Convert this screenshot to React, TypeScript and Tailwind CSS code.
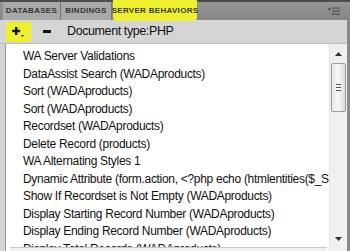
import React from "react";

const items = [
  "WA Server Validations",
  "DataAssist Search (WADAproducts)",
  "Sort (WADAproducts)",
  "Sort (WADAproducts)",
  "Recordset (WADAproducts)",
  "Delete Record (products)",
  "WA Alternating Styles 1",
  "Dynamic Attribute (form.action, <?php echo (htmlentities($_SERVER",
  "Show If Recordset is Not Empty (WADAproducts)",
  "Display Starting Record Number (WADAproducts)",
  "Display Ending Record Number (WADAproducts)",
  "Display Total Records (WADAproducts)",
];

export default function App() {
  return (
    <div
      className="w-[350px] h-[251px] overflow-hidden flex flex-col bg-[#d5d5d5] relative"
      style={{ fontFamily: "'Liberation Sans', Arial, sans-serif" }}
    >
      {/* Tab bar */}
      <div className="h-[20px] shrink-0 flex items-stretch bg-gradient-to-b from-[#959595] to-[#868686] border-t-2 border-[#4d4d4d] relative">
        <div className="ml-[3px] w-[58px] flex items-center justify-center whitespace-nowrap bg-[#a9a9a9] border-r border-[#777] text-[8px] font-bold text-[#353535] tracking-[0.3px]">
          DATABASES
        </div>
        <div className="w-[51px] flex items-center justify-center whitespace-nowrap bg-[#a9a9a9] border-r border-[#777] text-[8px] font-bold text-[#353535] tracking-[0.3px]">
          BINDINGS
        </div>
        <div className="ml-[1px] w-[84px] flex items-center justify-center whitespace-nowrap bg-[#eef02e] rounded-b-[4px] text-[8px] font-bold text-[#3a3a20] tracking-[0.3px] -mt-[2px] -mb-[1px]">
          SERVER BEHAVIORS
        </div>
        <div className="flex-1" />
        <div className="w-[20px] flex items-center justify-center mr-[6px]">
          <svg width="12" height="8" viewBox="0 0 12 8">
            <path d="M0 1.5 L3 1.5 L1.5 3.5 Z" fill="#333" />
            <rect x="4" y="0.5" width="8" height="1" fill="#444" />
            <rect x="4" y="3.5" width="8" height="1" fill="#444" />
            <rect x="4" y="6.5" width="8" height="1" fill="#444" />
          </svg>
        </div>
      </div>

      {/* Toolbar */}
      <div className="h-[24px] shrink-0 flex items-center bg-[#d5d5d5] border-b border-[#bdbdbd]">
        <div className="ml-[6px] w-[25px] h-[20px] bg-[#eef02e] rounded-[2px] flex items-center justify-center">
          <svg width="14" height="12" viewBox="0 0 14 12">
            <rect x="3" y="1" width="2.4" height="8" fill="#111" />
            <rect x="0.2" y="3.8" width="8" height="2.4" fill="#111" />
            <path d="M9 9 L12 9 L10.5 11 Z" fill="#222" />
          </svg>
        </div>
        <div className="ml-[12px] w-[8px] h-[2.5px] bg-[#111]" />
        <div className="ml-[16px] text-[12.5px] tracking-[-0.4px] text-[#111]">Document type:PHP</div>
      </div>

      {/* List */}
      <div className="flex-1 min-h-0 flex ml-[5px] mr-[3px] border-l border-[#9a9a9a] bg-white relative">
        <div className="flex-1 min-w-0 overflow-hidden pt-[4px]">
          {items.map((t, i) => (
            <div
              key={i}
              className="h-[17.5px] leading-[17.5px] pl-[17px] whitespace-nowrap text-[12px] tracking-[-0.3px] text-[#111]"
            >
              {t}
            </div>
          ))}
        </div>
        {/* vertical scrollbar */}
        <div className="w-[18px] shrink-0 flex flex-col items-center bg-[#f0f0f0] border-l border-[#e4e4e4] pb-[4px]">
          <div className="h-[19px] flex items-center justify-center">
            <svg width="7" height="4" viewBox="0 0 7 4">
              <path d="M0 4 L3.5 0 L7 4 Z" fill="#333" />
            </svg>
          </div>
          <div className="w-[15px] h-[49px] rounded-[2px] border border-[#9d9d9d] bg-gradient-to-r from-[#e9e9e9] via-[#f7f7f7] to-[#dadada] flex flex-col items-center justify-center gap-[2px]">
            <div className="w-[5px] h-[1px] bg-[#555]" />
            <div className="w-[5px] h-[1px] bg-[#555]" />
            <div className="w-[5px] h-[1px] bg-[#555]" />
          </div>
          <div className="flex-1" />
          <div className="h-[16px] flex items-center justify-center">
            <svg width="7" height="4" viewBox="0 0 7 4">
              <path d="M0 0 L7 0 L3.5 4 Z" fill="#333" />
            </svg>
          </div>
        </div>
        <div className="absolute left-[4px] right-[20px] bottom-0 h-[4px] bg-[#f0f0f0] border-t border-[#c8c8c8]" />
      </div>
      <div className="absolute top-[20px] right-0 w-[3px] h-[231px] bg-[#8a8a8a]" />
    </div>
  );
}
